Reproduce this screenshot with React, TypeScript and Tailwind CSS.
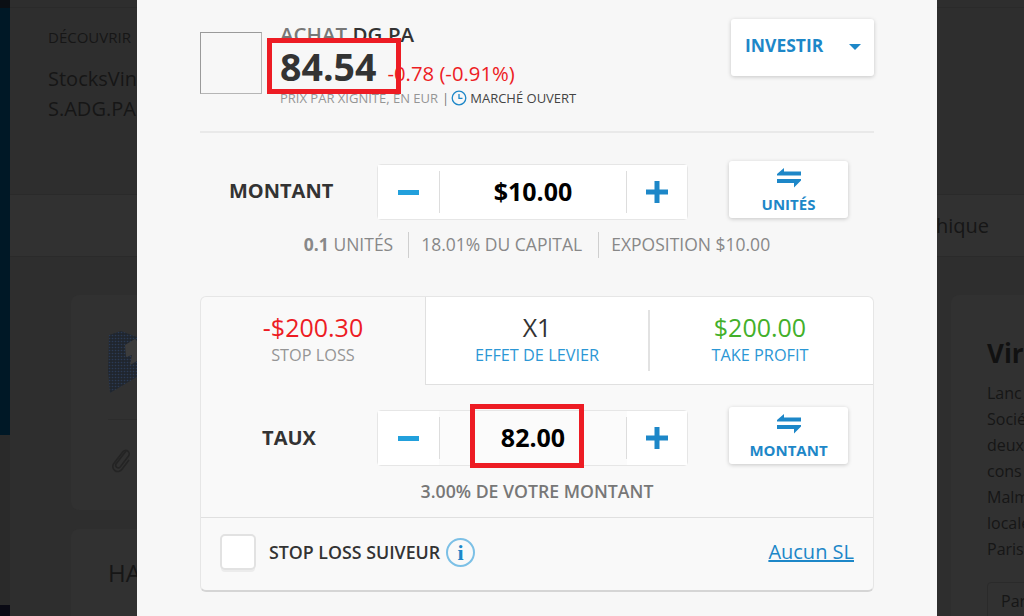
import React from "react";

const Swap = () => (
  <svg width="24" height="20" viewBox="0 0 24 20" fill="#1d87c8">
    <path d="M7 0 L7 3.5 L24 3.5 L24 7.5 L0 7.5 L0 6 Z" />
    <path d="M0 11 L24 11 L24 12.5 L17 19.5 L17 15 L0 15 Z" />
  </svg>
);

const Minus = () => <span className="block h-[5px] w-[21px] bg-[#22a0dc]" />;

const Plus = () => (
  <svg width="22" height="22" viewBox="0 0 22 22" fill="#1d87c8">
    <path d="M8.5 0h5v8.500h8.500v5h-8.500v8.500h-5v-8.500h-8.500v-5h8.500z" />
  </svg>
);

function Stepper({ value, flat }: { value: string; flat?: boolean }) {
  return (
    <div className={`flex h-[56px] w-[311px] items-stretch rounded border border-[#e6e6e6] ${flat ? "bg-[#fbfbfb]" : "bg-white"}`}>
      <div className="flex w-[61px] items-center justify-center bg-white">
        <Minus />
      </div>
      <div className="my-[6px] w-px bg-[#dddddd]" />
      <div className="flex flex-1 items-center justify-center text-[25px] font-bold text-black">{value}</div>
      <div className="my-[6px] w-px bg-[#dddddd]" />
      <div className="flex w-[60px] items-center justify-center bg-white">
        <Plus />
      </div>
    </div>
  );
}

function SwapButton({ label }: { label: string }) {
  return (
    <div className="flex h-[57px] w-[119px] flex-col items-center rounded-[3px] bg-white pt-[7px] shadow-[0_1px_4px_rgba(0,0,0,0.2)]">
      <Swap />
      <span className="mt-[7px] text-[15px] leading-[18px] font-bold text-[#1d87c8]">{label}</span>
    </div>
  );
}

export default function App() {
  return (
    <div className="relative flex h-[616px] w-[1024px] overflow-hidden bg-[#2e2e2e] font-['Open_Sans',sans-serif] text-[#2b2b2b]">
      {/* Sidebar */}
      <div className="flex w-[10px] shrink-0 flex-col">
        <div className="h-[8px] bg-[#0b0f14]" />
        <div className="h-[427px] bg-[#001826]" />
        <div className="flex-1 bg-[#2a2a2a]" />
        <div className="h-[11px] bg-[#0a0a14]" />
      </div>

      {/* Page behind the dialog */}
      <div className="w-[1014px] shrink-0">
        <div className="h-[8px] border-b border-[#2a2a2a] bg-[#2e2e2e]" />
        <div className="h-[187px] border-b border-[#2a2a2a] bg-[#2e2e2e] pt-[19px] pl-[38px] text-[#161616]">
          <div className="text-[15px] leading-[20px]">DÉCOUVRIR</div>
          <div className="mt-[17px] text-[20px] leading-[30px]">StocksVin</div>
          <div className="text-[20px] leading-[30px]">S.ADG.PA</div>
        </div>
        <div className="flex h-[62px] items-center justify-end border-b border-[#2a2a2a] bg-[#313131] pr-[35px] text-[20px] text-[#161616]">
          hique
        </div>
        <div className="flex pt-[38px]">
          <div className="ml-[61px] w-[66px] shrink-0">
            <div className="h-[215px] rounded-l-lg bg-[#313131] pt-[36px] pl-[37px]">
              <svg width="29" height="62" viewBox="0 0 29 62">
                <defs>
                  <pattern id="dots" width="3" height="3" patternUnits="userSpaceOnUse">
                    <rect width="3" height="3" fill="#20262e" />
                    <circle cx="1.500" cy="1.500" r="0.800" fill="#2a3a55" />
                  </pattern>
                </defs>
                <path d="M1 4 L13 0 L29 6 L29 46 L2 62 L0 40 Z" fill="url(#dots)" />
                <path d="M17 14 L27 8 L29 10 L29 30 L22 34 L24 24 L18 26 Z" fill="#3c3c3c" />
              </svg>
              <div className="mt-[26px] border-t border-[#2c2c2c] pt-[27px]">
                <svg width="20" height="26" viewBox="0 0 20 26" fill="none" stroke="#242424" strokeWidth="1.600" className="ml-[3px]">
                  <path d="M15 4 L5 17 a2.600 2.600 0 0 0 4.200 3 L17.500 9 a3.500 3.500 0 0 0 -5.600 -4.200 L2.800 16.500 a5 5 0 0 0 8 6 L18 13" />
                </svg>
              </div>
            </div>
            <div className="mt-[19px] h-[120px] rounded-l-lg bg-[#313131] pt-[26px] pl-[37px] text-[24px] text-[#161616]">HA</div>
          </div>
          <div className="ml-[814px] min-w-0 flex-1 overflow-hidden rounded-l-lg bg-[#313131] pl-[36px]">
            <div className="mt-[41px] text-[26px] leading-[34px] font-bold whitespace-nowrap text-[#111111]">Vir</div>
            <div className="mt-[10px] text-[16px] leading-[26px] whitespace-nowrap text-[#161616]">
              <div>Lanc</div>
              <div>Socié</div>
              <div>deux</div>
              <div>cons</div>
              <div>Malm</div>
              <div>locale</div>
              <div>Paris</div>
            </div>
            <div className="mt-[20px] h-[40px] w-[60px] rounded border border-[#2a2a2a] pt-[6px] pl-[13px] text-[#161616]">Par</div>
          </div>
        </div>
      </div>

      {/* Dialog */}
      <div className="absolute top-0 left-[137px] h-[616px] w-[800px] bg-[#f7f7f7] px-[63px]">
        <div className="relative flex h-[133px] items-start border-b-2 border-[#e9e9e9]">
          <div className="mt-[32px] h-[62px] w-[62px] shrink-0 border border-[#b5b5b5] border-t-[#9a9a9a] border-l-[#9a9a9a]" />
          <div className="ml-[18px] flex-1 pt-[22px]">
            <div className="text-[20.5px] leading-[24px] font-semibold text-[#333333]">
              <span className="text-[#777777]">ACHAT</span> DG.PA
            </div>
            <div className="flex h-[41px] items-baseline">
              <span className="text-[37.5px] leading-[41px] font-bold text-[#333333]">84.54</span>
              <span className="ml-[11px] text-[20.3px] text-[#ed1c24]">-0.78 (-0.91%)</span>
            </div>
            <div className="mt-[2px] flex items-center text-[13px] leading-[18px] whitespace-nowrap text-[#959595]">
              PRIX PAR XIGNITE, EN EUR <span className="mr-[2px] ml-[4px] text-[#777777]">|</span>
              <svg width="16" height="16" viewBox="0 0 16 16" fill="none" stroke="#1d87c8" strokeWidth="1.300">
                <circle cx="8" cy="8" r="6.800" />
                <path d="M8 4v4.300h3.500" />
              </svg>
              <span className="ml-[3px] text-[#444444]">MARCHÉ OUVERT</span>
            </div>
          </div>
          <div className="mt-[19px] flex h-[57px] w-[143px] shrink-0 items-start justify-between rounded-[3px] bg-white pt-[14px] pr-[13px] pl-[14px] shadow-[0_1px_4px_rgba(0,0,0,0.2)]">
            <span className="text-[17.5px] leading-[24px] font-bold text-[#1d87c8]">INVESTIR</span>
            <span className="mt-[11px] h-0 w-0 border-x-[6px] border-t-[6px] border-x-transparent border-t-[#1d87c8]" />
          </div>
        </div>

        <div className="flex pt-[28px]">
          <div className="flex h-[60px] w-[177px] items-center pl-[29px] text-[20px] font-bold text-[#333333]">MONTANT</div>
          <div className="mt-[3px]">
            <Stepper value="$10.00" />
          </div>
          <div className="ml-[41px]">
            <SwapButton label="UNITÉS" />
          </div>
        </div>

        <div className="mt-[10px] flex h-[27px] items-center justify-center text-[17.5px] text-[#888888]">
          <span>
            <b>0.1</b> UNITÉS
          </span>
          <span className="mr-[12px] ml-[15px] h-[26px] w-px bg-[#cfcfcf]" />
          <span>18.01% DU CAPITAL</span>
          <span className="mr-[12px] ml-[16px] h-[26px] w-px bg-[#cfcfcf]" />
          <span>EXPOSITION $10.00</span>
        </div>

        <div className="mt-[38px] h-[296px] rounded-md border border-[#e6e6e6] border-b-2 border-b-[#d5d5d5] bg-[#f9f9f9]">
          <div className="flex h-[88px]">
            <div className="flex w-[224px] flex-col items-center pt-[14px]">
              <span className="text-[25px] leading-[32px] text-[#ed1c24]">-$200.30</span>
              <span className="mt-[2px] text-[16.3px] leading-[21px] text-[#959595]">STOP LOSS</span>
            </div>
            <div className="flex flex-1 items-stretch rounded-tr-md border-b border-l border-[#e0e0e0] bg-white">
              <div className="flex w-[222px] flex-col items-center pt-[14px]">
                <span className="text-[25px] leading-[32px] text-[#333333]">X1</span>
                <span className="mt-[2px] text-[16.3px] leading-[21px] text-[#2c97d5]">EFFET DE LEVIER</span>
              </div>
              <div className="my-[13px] w-[2px] bg-[#e2e2e2]" />
              <div className="flex flex-1 flex-col items-center pt-[14px] pr-[3px]">
                <span className="text-[25px] leading-[32px] text-[#43b02a]">$200.00</span>
                <span className="mt-[2px] text-[16.3px] leading-[21px] text-[#2c97d5]">TAKE PROFIT</span>
              </div>
            </div>
          </div>

          <div className="flex pt-[25px]">
            <div className="flex h-[56px] w-[176px] items-center justify-center text-[20px] font-bold text-[#333333]">TAUX</div>
            <Stepper value="82.00" flat />
            <div className="mt-[-3px] ml-[41px]">
              <SwapButton label="MONTANT" />
            </div>
          </div>

          <div className="mt-[12px] h-[40px] border-b border-[#e0e0e0] text-center text-[17.7px] leading-[26px] font-semibold text-[#777777]">
            3.00% DE VOTRE MONTANT
          </div>

          <div className="flex h-[72px] items-center pr-[19px] pb-[4px] pl-[19px]">
            <div className="h-[36px] w-[36px] rounded-[5px] border-2 border-[#e2e2e2] bg-white shadow-[0_3px_0_-1px_#ececec]" />
            <span className="ml-[13px] text-[17.8px] font-semibold whitespace-nowrap text-[#333333]">STOP LOSS SUIVEUR</span>
            <span className="ml-[6px] flex h-[29px] w-[29px] items-center justify-center rounded-full border-2 border-[#7cc0e6] font-['Liberation_Serif',serif] text-[22px] font-bold text-[#1d87c8]">
              i
            </span>
            <span className="ml-auto text-[20px] text-[#1d87c8] underline">Aucun SL</span>
          </div>
        </div>
      </div>

      {/* Highlight boxes */}
      <div className="absolute top-[38px] left-[267px] h-[56px] w-[134px] border-[5px] border-[#ed1c24]" />
      <div className="absolute top-[404px] left-[470px] h-[64px] w-[114px] border-[5px] border-[#ed1c24]" />
    </div>
  );
}
